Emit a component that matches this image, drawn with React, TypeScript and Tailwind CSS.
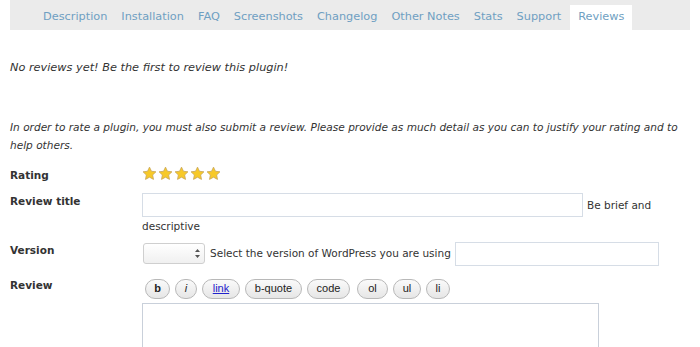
import React from "react";

const Star = () => (
  <svg width="15" height="15" viewBox="0 0 24 24">
    <path
      d="M12 1.8l3.1 6.6 7.2.9-5.3 5 1.4 7.1L12 17.9l-6.4 3.5 1.4-7.1-5.3-5 7.2-.9z"
      fill="#f7c928"
      stroke="#c9a65a"
      strokeWidth="1.3"
      strokeLinejoin="round"
    />
  </svg>
);

const Btn = ({ children, cls = "" }: { children: React.ReactNode; cls?: string }) => (
  <span
    className={`inline-flex h-[20px] items-center justify-center rounded-full border border-[#b8b8b8] bg-gradient-to-b from-[#fafafa] to-[#e6e6e6] text-[11px] text-[#222] ${cls}`}
    style={{ fontFamily: '"Liberation Sans", Arial, sans-serif' }}
  >
    {children}
  </span>
);

export default function App() {
  const tabs = ["Description", "Installation", "FAQ", "Screenshots", "Changelog", "Other Notes", "Stats", "Support"];
  return (
    <div
      className="h-[347px] w-[700px] overflow-hidden bg-white text-[10.5px] text-[#333]"
      style={{ fontFamily: '"DejaVu Sans", Verdana, sans-serif' }}
    >
      <div className="mx-[10px] flex h-[30px] items-end bg-[#ebebeb] pl-[26px] text-[11.3px] leading-[14px]">
        {tabs.map((t) => (
          <span key={t} className="px-[7px] pb-[6px] text-[#6f9fc2]">
            {t}
          </span>
        ))}
        <span className="ml-[2px] bg-white px-[8px] pb-[6px] pt-[5px] text-[#6f9fc2]">Reviews</span>
      </div>

      <p className="mt-[30px] px-[10px] text-[11.3px] italic">No reviews yet! Be the first to review this plugin!</p>

      <p className="mt-[41px] px-[10px] text-[10.55px] leading-[18px] italic">
        In order to rate a plugin, you must also submit a review. Please provide as much detail as you can to justify your rating and to
        help others.
      </p>

      <div className="mt-[12px] grid grid-cols-[132px_1fr] px-[10px]">
        <div className="pt-[2px] font-bold">Rating</div>
        <div className="flex gap-[1px]">
          {[0, 1, 2, 3, 4].map((i) => (
            <Star key={i} />
          ))}
        </div>

        <div className="pt-[10px] font-bold">Review title</div>
        <div className="pt-[9px]">
          <div className="flex items-center">
            <div className="h-[24px] w-[441px] border border-[#d6dde6] bg-white" />
            <span className="ml-[4px] pt-[3px]">Be brief and</span>
          </div>
          <div className="mt-[1px] leading-[16px]">descriptive</div>
        </div>

        <div className="pt-[9px] font-bold">Version</div>
        <div className="flex items-center pt-[8px]">
          <div className="ml-[1px] flex h-[21px] w-[62px] items-center justify-end rounded-[3px] border border-[#cfcfcf] bg-gradient-to-b from-white to-[#f0f0f0] pr-[3px]">
            <svg width="7" height="11" viewBox="0 0 7 11">
              <path d="M1 4l2.5-3L6 4z M1 7l2.5 3L6 7z" fill="#555" />
            </svg>
          </div>
          <span className="ml-[5px]">Select the version of WordPress you are using</span>
          <div className="ml-[4px] h-[24px] w-[204px] border border-[#d6dde6] bg-white" />
        </div>

        <div className="pt-[12px] font-bold">Review</div>
        <div className="pt-[13px]">
          <div className="flex gap-[5px] pl-[3px]">
            <Btn cls="w-[25px] font-bold">b</Btn>
            <Btn cls="w-[22px] italic">i</Btn>
            <Btn cls="w-[38px] text-[#2222cc] underline">link</Btn>
            <Btn cls="w-[57px]">b-quote</Btn>
            <Btn cls="w-[43px]">code</Btn>
            <Btn cls="w-[31px] ml-[2px]">ol</Btn>
            <Btn cls="w-[28px]">ul</Btn>
            <Btn cls="w-[24px]">li</Btn>
          </div>
          <div className="mt-[4px] h-[60px] w-[457px] border border-[#c9d0da] bg-white" />
        </div>
      </div>
    </div>
  );
}
